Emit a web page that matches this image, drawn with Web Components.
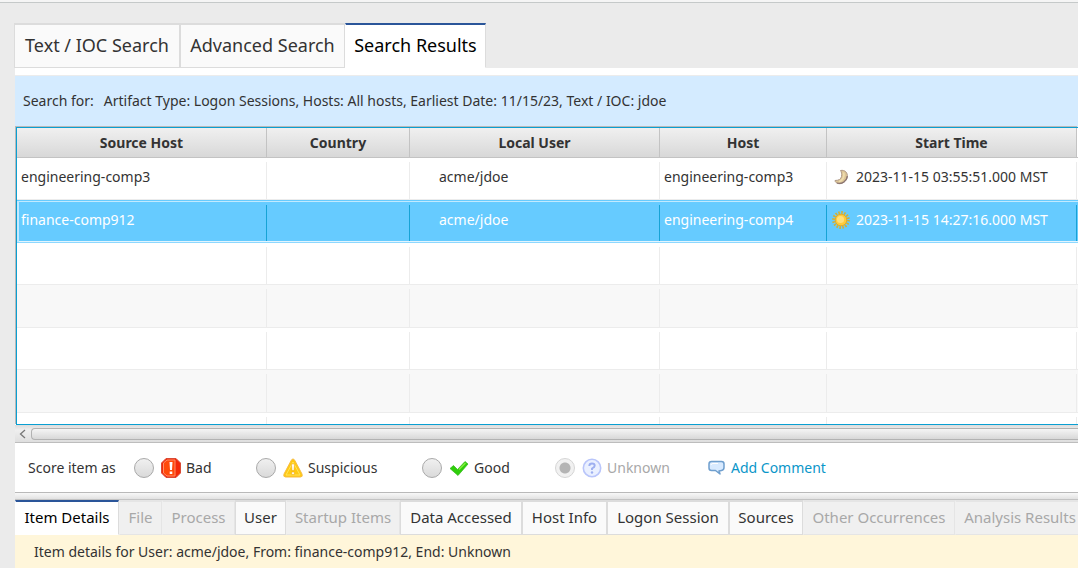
<!DOCTYPE html>
<html lang="en">
<head>
<meta charset="utf-8">
<title>Search Results</title>
<style>
  body { margin: 0; background: #ebebeb; color: #333; font: 14px/20px "Noto Sans", "Open Sans", sans-serif; }
</style>
</head>
<body>
<app-shell>
  <tab-bar slot="tabs" size="large" label="Search">
    <tab-item style="--w:166px">Text / IOC Search</tab-item>
    <tab-item style="--w:165px">Advanced Search</tab-item>
    <tab-item style="--w:141px" selected>Search Results</tab-item>
  </tab-bar>
  <search-summary><span slot="label">Search for:</span>Artifact Type: Logon Sessions, Hosts: All hosts, Earliest Date: 11/15/23, Text / IOC: jdoe</search-summary>
  <results-table></results-table>
  <h-scrollbar></h-scrollbar>
  <score-bar></score-bar>
  <pane-splitter></pane-splitter>
  <tab-bar label="Item">
    <tab-item style="--w:104px" selected>Item Details</tab-item>
    <tab-item style="--w:43px" disabled>File</tab-item>
    <tab-item style="--w:73px" disabled>Process</tab-item>
    <tab-item style="--w:51px">User</tab-item>
    <tab-item style="--w:114px" disabled>Startup Items</tab-item>
    <tab-item style="--w:122px">Data Accessed</tab-item>
    <tab-item style="--w:85px">Host Info</tab-item>
    <tab-item style="--w:122px">Logon Session</tab-item>
    <tab-item style="--w:74px">Sources</tab-item>
    <tab-item style="--w:152px" disabled>Other Occurrences</tab-item>
    <tab-item style="--w:130px" disabled>Analysis Results</tab-item>
  </tab-bar>
  <detail-banner>Item details for User: acme/jdoe, From: finance-comp912, End: Unknown</detail-banner>
</app-shell>

<script>
function define(name, html, setup) {
  const template = document.createElement('template');
  template.innerHTML = html;
  customElements.define(name, class extends HTMLElement {
    constructor() {
      super();
      this.attachShadow({ mode: 'open' }).append(template.content.cloneNode(true));
    }
    connectedCallback() { if (setup) setup(this, this.shadowRoot); }
  });
}

define('app-shell', `
  <style>
    :host { display: flex; flex-direction: column; min-height: 100vh; box-sizing: border-box; overflow: hidden; }
    .edge { height: 2px; background: #f5f5f5; border-bottom: 1px solid #c5c9c9; }
    .tabs { padding: 20px 0 0 14px; }
    main { flex: 1; display: flex; flex-direction: column; margin-left: 15px; padding-top: 7px; background: #fff; min-width: 0; }
  </style>
  <div class="edge"></div>
  <div class="tabs"><slot name="tabs"></slot></div>
  <main><slot></slot></main>`);

define('tab-bar', `
  <style>
    :host { display: block; background: #ebebeb; --tab-font: 15px; --tab-height: 35px; }
    :host([size="large"]) { --tab-font: 18px; --tab-height: 45px; }
    nav { display: flex; overflow: hidden; }
  </style>
  <nav role="tablist"><slot></slot></nav>`,
  (el, root) => root.querySelector('nav').setAttribute('aria-label', el.getAttribute('label')));

define('tab-item', `
  <style>
    :host { display: block; flex: 0 0 var(--w); }
    button { box-sizing: border-box; width: 100%; height: var(--tab-height); margin: 0; padding: 0 0 2px; white-space: nowrap;
      font: inherit; font-size: var(--tab-font); line-height: 24px; color: #333; background: #fafafa;
      border: 1px solid #dcdcdc; border-top-width: 2px; }
    button:disabled { color: #a8a8a8; background: #f0f0f0; border-color: #e5e5e5; border-left-color: #f0f0f0; }
    :host([selected]) button { color: #000; background: #fff; border-color: #fff #dcdcdc #fff #fff; border-top: 2px solid #2a5599; }
  </style>
  <button type="button" role="tab"><slot></slot></button>`,
  (el, root) => {
    const button = root.querySelector('button');
    button.disabled = el.hasAttribute('disabled');
    button.setAttribute('aria-selected', el.hasAttribute('selected'));
  });

define('search-summary', `
  <style>
    :host { display: flex; gap: 10px; padding: 15px 8px 16px; background: #d4ebff; border-top: 1px solid #ececec; white-space: nowrap; }
  </style>
  <slot name="label"></slot><span><slot></slot></span>`);

define('results-table', `
  <style>
    :host { display: block; border: 1px solid #0a9fd2; border-right: 0; box-shadow: -1px -1px 0 #b9b9b9; margin-left: 1px; height: 296px; overflow: hidden; }
    table { width: 100%; table-layout: fixed; border-collapse: separate; border-spacing: 0; }
    .c1, .c3, .c5 { width: 250px; } .c2 { width: 143px; } .c4 { width: 167px; }
    th { box-sizing: border-box; height: 30px; padding: 0; font-weight: 700; line-height: 20px;
      background: linear-gradient(#f0f0f0, #d8d8d8); border-bottom: 1px solid #c3c3c3; border-right: 1px solid #c3c3c3; }
    td { box-sizing: border-box; height: 42px; padding: 0 4px 4px; border-bottom: 1px solid #ececec; white-space: nowrap;
      background: linear-gradient(#ececec, #ececec) right bottom / 1px calc(100% - 4px) no-repeat; line-height: 20px; }
    th:last-child, td:last-child { border-right: 0; background-image: none; }
    tr:nth-child(even) td { height: 43px; background-color: #f8f8f8; }
    td:nth-child(3) { padding-left: 29px; }
    td:nth-child(5) { padding-left: 5px; }
    tbody tr.selected td { color: #fff; background-color: #66cbff; background-image: linear-gradient(#16a3d6, #16a3d6);
      border-top: 1px solid #66cbff; border-bottom: 1px solid #8dd8ff; box-shadow: inset 0 1px #c2eaff, inset 0 -1px #e2f5ff; }
    tbody tr.selected td:first-child { box-shadow: inset 2px 1px #c2eaff, inset 0 -1px #e2f5ff; }
    tbody tr.selected td:last-child { background-image: none; }
    .time { display: flex; align-items: center; gap: 6px; }
    svg { flex: none; }
  </style>
  <table>
    <colgroup><col class="c1"><col class="c2"><col class="c3"><col class="c4"><col class="c5"><col></colgroup>
    <thead><tr><th>Source Host</th><th>Country</th><th>Local User</th><th>Host</th><th>Start Time</th><th></th></tr></thead>
    <tbody>
      <tr><td>engineering-comp3</td><td></td><td>acme/jdoe</td><td>engineering-comp3</td><td><div class="time">
        <svg width="18" height="18" viewBox="0 0 18 18"><path d="M8.500 2.500C13 1.500 16 5 15.300 9C14.500 13.500 10 16.500 6 15.500C4.500 15 3 14 3 12.500C7 12.500 9 11 9.500 8.500C10 6 9.500 4 8.500 2.500Z" fill="#dcc596" stroke="#b09a88"/><path d="M11.500 4.500C13 8 11 12 7 13.800" fill="none" stroke="#efdcae" stroke-width="1.800"/><path d="M5 15C10 16.500 14.800 13 15.300 8" fill="none" stroke="#8a7472" stroke-width="1.200"/></svg>
        <span>2023-11-15 03:55:51.000 MST</span></div></td><td></td></tr>
      <tr class="selected"><td>finance-comp912</td><td></td><td>acme/jdoe</td><td>engineering-comp4</td><td><div class="time">
        <svg width="18" height="18" viewBox="0 0 18 18"><circle cx="9" cy="9" r="7.200" fill="none" stroke="#d2b135" stroke-width="3.400" stroke-dasharray="1.500 1.327"/><circle cx="9" cy="9" r="5.800" fill="#ffcb3a" stroke="#e3ab2c"/><circle cx="8.500" cy="8.500" r="3.600" fill="#ffe07c"/></svg>
        <span>2023-11-15 14:27:16.000 MST</span></div></td><td></td></tr>
      <tr><td></td><td></td><td></td><td></td><td></td><td></td></tr>
      <tr><td></td><td></td><td></td><td></td><td></td><td></td></tr>
      <tr><td></td><td></td><td></td><td></td><td></td><td></td></tr>
      <tr><td></td><td></td><td></td><td></td><td></td><td></td></tr>
      <tr><td></td><td></td><td></td><td></td><td></td><td></td></tr>
    </tbody>
  </table>`);

define('h-scrollbar', `
  <style>
    :host { display: flex; align-items: center; height: 17px; background: linear-gradient(#dcdcdc, #efefef 30%, #dedede); border-bottom: 1px solid #bdbdbd; }
    button { flex: none; width: 16px; height: 16px; padding: 0; border: 0; background: none; display: grid; place-items: center; }
    .thumb { flex: 1; box-sizing: border-box; height: 12px; border: 1px solid #b2b2b2; border-right: 0; border-radius: 4px 0 0 4px; background: linear-gradient(#f5f5f5, #d8d8d8); }
  </style>
  <button type="button" aria-label="Scroll left"><svg width="8" height="10" viewBox="0 0 8 10"><path d="M6 1L1.500 5L6 9" fill="none" stroke="#777" stroke-width="1.300"/></svg></button>
  <div class="thumb"></div>`);

define('score-bar', `
  <style>
    :host { display: grid; grid-template-columns: 106px 122px 166px 133px 153px 1fr; align-items: center; height: 49px; padding-left: 13px; white-space: nowrap; }
    label, a { display: flex; align-items: center; gap: 5px; }
    input { appearance: none; box-sizing: border-box; flex: none; width: 20px; height: 20px; margin: 0 2px 0 0; border: 1px solid #a9a9a9; border-radius: 50%; background: linear-gradient(#f0f0f0, #dadada); }
    label.off { color: #a8a8a8; }
    input:disabled { border-color: #d5d5d5; background: radial-gradient(circle, #b4b4b4 0 5px, #f1f1f1 6px); }
    svg { flex: none; }
    a { color: #0a96c9; text-decoration: none; }
  </style>
  <span>Score item as</span>
  <label><input type="radio" name="score">
    <svg width="20" height="20" viewBox="0 0 20 20"><path d="M5 .5H15L19.500 5V15L15 19.500H5L.5 15V5Z" fill="#f22a08" stroke="#d94a35"/><path d="M6 2H14V18H6L2.500 15V5Z" fill="#ff4a0a" stroke="#ff8d68" stroke-width="1"/><path d="M8.500 4H11.500L11 12H9ZM8.700 13.500H11.300V16H8.700Z" fill="#fff"/></svg>Bad</label>
  <label><input type="radio" name="score">
    <svg width="20" height="20" viewBox="0 0 20 20"><path d="M10 1Q11.200 1 12 2.800L19 16Q20 19 17.500 19H2.500Q0 19 1 16L8 2.800Q8.800 1 10 1Z" fill="#ffca12" stroke="#f7bd45"/><path d="M10 4L17 17H3Z" fill="none" stroke="#ffe35a"/><path d="M8.500 6H11.500L11 12.500H9ZM8.700 14H11.300V16.500H8.700Z" fill="#fff" stroke="#eea300" stroke-width=".5"/></svg>Suspicious</label>
  <label><input type="radio" name="score">
    <svg width="20" height="20" viewBox="0 0 20 20"><path d="M1 10.500L4.500 7.500L8.500 11.500L16 3.500L19 6L9 17.500Z" fill="#2fce0b" stroke="#32b718" stroke-width=".7"/><path d="M10 11.500L16.500 5" stroke="#83ef3c" stroke-width="1.500"/></svg>Good</label>
  <label class="off"><input type="radio" name="score" checked disabled>
    <svg width="20" height="20" viewBox="0 0 20 20"><circle cx="10" cy="10" r="8.700" fill="#eaf0ff" stroke="#b9c5fa" stroke-width="1.600"/><path d="M7.300 8Q7.300 5.500 10 5.500T12.700 7.800Q12.700 9.200 10 10.500V12" fill="none" stroke="#9daff0" stroke-width="1.900"/><circle cx="10" cy="14.500" r="1.200" fill="#9daff0"/></svg>Unknown</label>
  <a href="#comment"><svg width="18" height="18" viewBox="0 0 18 18"><path d="M3.500 2.500H13.500Q16 2.500 16 5V8.500Q16 11 13.500 11.500L11 12L12 15L7.500 11.500H3.500Q1 11.500 1 9V5Q1 2.500 3.500 2.500Z" fill="#d8eaff" stroke="#6f9fce" stroke-width="1.500" stroke-linejoin="round"/><path d="M3 6Q3 4.500 5 4.500H10" fill="none" stroke="#fff"/></svg>Add Comment</a>`);

define('pane-splitter', `
  <style>
    :host { display: block; box-sizing: border-box; height: 8px; background: linear-gradient(#f8f8f8, #e2e2e2); border-top: 1px solid #b9b9b9; border-bottom: 1px solid #c3c3c3; }
  </style>`);

define('detail-banner', `
  <style>
    :host { display: block; flex: 1; padding: 7px 19px 6px; background: #fff6da; white-space: nowrap; }
  </style>
  <slot></slot>`);
</script>
</body>
</html>
